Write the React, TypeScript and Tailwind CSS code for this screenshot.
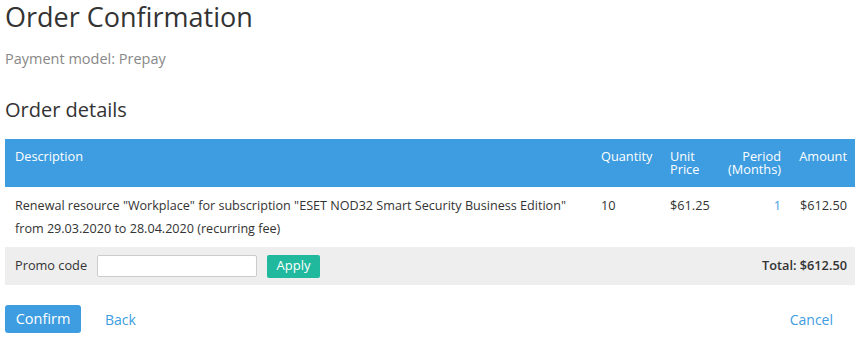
export default function App() {
  return (
    <div className="min-h-screen bg-white font-['Open_Sans',sans-serif] text-[#333]">
      <div className="w-[859px] px-[5px]">
        <h1 className="text-[27px] leading-[34px] text-[#333]">Order Confirmation</h1>
        <p className="mt-[15px] text-[14.5px] leading-5 text-[#888]">Payment model: Prepay</p>
        <h2 className="mt-[28px] text-[20px] leading-[26px] text-[#333]">Order details</h2>

        <table className="mt-[16px] w-[850px] border-collapse text-[12.75px]">
          <colgroup>
            <col />
            <col className="w-[69px]" />
            <col className="w-[60px]" />
            <col className="w-[71px]" />
            <col className="w-[64px]" />
          </colgroup>
          <thead>
            <tr className="h-[48px] bg-[#3d9de0] text-white">
              <th className="px-[10px] pt-[11px] text-left align-top font-normal leading-[12.5px]">Description</th>
              <th className="pl-[10px] pt-[11px] text-left align-top font-normal leading-[12.5px]">Quantity</th>
              <th className="pl-[10px] pt-[11px] text-left align-top font-normal leading-[12.5px]">Unit<br />Price</th>
              <th className="pr-[10px] pt-[11px] text-right align-top font-normal leading-[12.5px]">Period<br />(Months)</th>
              <th className="pr-[8px] pt-[11px] text-right align-top font-normal leading-[12.5px]">Amount</th>
            </tr>
          </thead>
          <tbody>
            <tr className="h-[60px]">
              <td className="px-[10px] pt-[7px] align-top text-[12.6px] leading-[23px] whitespace-nowrap">
                Renewal resource "Workplace" for subscription "ESET NOD32 Smart Security Business Edition"
                <br />
                from 29.03.2020 to 28.04.2020 (recurring fee)
              </td>
              <td className="pl-[10px] pt-[7px] align-top leading-[23px]">10</td>
              <td className="pl-[10px] pt-[7px] align-top leading-[23px]">$61.25</td>
              <td className="pr-[10px] pt-[7px] text-right align-top leading-[23px] text-[#3d9de0]">1</td>
              <td className="pr-[8px] pt-[7px] text-right align-top leading-[23px]">$612.50</td>
            </tr>
            <tr className="bg-[#eeeeee]">
              <td colSpan={5} className="h-[38px] pl-[10px] pr-[8px]">
                <div className="flex items-center">
                  <span>Promo code</span>
                  <input className="ml-[10px] h-[22px] w-[160px] rounded-[2px] border border-[#ccc] bg-white" />
                  <button className="ml-[10px] h-[23px] w-[53px] rounded-[2px] bg-[#20b99e] text-[13px] text-white">Apply</button>
                  <span className="ml-auto font-semibold">Total: $612.50</span>
                </div>
              </td>
            </tr>
          </tbody>
        </table>

        <div className="mt-[20px] flex w-[850px] items-center">
          <button className="h-[28px] w-[76px] rounded-[3px] bg-[#3d9de0] text-[14.5px] text-white">Confirm</button>
          <a className="ml-[24px] text-[14px] text-[#3d9de0]">Back</a>
          <a className="ml-auto mr-[22px] text-[14px] text-[#3d9de0]">Cancel</a>
        </div>
      </div>
    </div>
  );
}
